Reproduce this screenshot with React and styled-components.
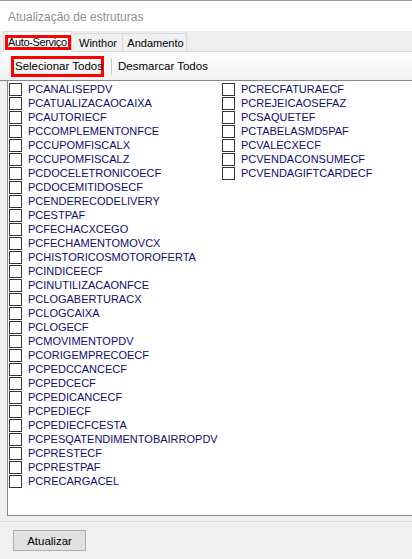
import React from "react";
import styled, { createGlobalStyle } from "styled-components";

const Global = createGlobalStyle`
  html, body { margin: 0; padding: 0; background: #f0f0f0; }
  * { box-sizing: border-box; }
`;

const Window = styled.div`
  width: 412px;
  height: 559px;
  display: flex;
  flex-direction: column;
  background: #f0f0f0;
  border-top: 1px solid #a0a0a0;
  font-family: "Liberation Sans", Arial, sans-serif;
  overflow: hidden;
`;

const TitleBar = styled.div`
  height: 30px;
  background: #ffffff;
  display: flex;
  align-items: center;
  padding-left: 8px;
  padding-top: 1px;
  color: #8f8f8f;
  font-size: 12px;
  flex-shrink: 0;
`;

const TabStrip = styled.div`
  height: 21px;
  background: #eeeeee;
  display: flex;
  align-items: flex-end;
  padding-left: 3px;
  border-bottom: 1px solid #d9d9d9;
  flex-shrink: 0;
`;

const Tab = styled.div`
  height: ${(p) => (p.$active ? "21px" : "19px")};
  margin-bottom: -1px;
  width: ${(p) => p.$w}px;
  background: ${(p) => (p.$active ? "#ffffff" : "#f0f0f0")};
  border: 1px solid #d9d9d9;
  border-left: ${(p) => (p.$first || p.$active ? "1px solid #d9d9d9" : "none")};
  border-bottom: ${(p) => (p.$active ? "1px solid #ffffff" : "1px solid #d9d9d9")};
  display: flex;
  align-items: ${(p) => (p.$active ? "flex-start" : "center")};
  justify-content: ${(p) => (p.$active ? "flex-start" : "center")};
  padding: ${(p) => (p.$active ? "3px 0 0 1px" : "1px 0 0 2px")};
  font-size: 11px;
  color: #000;
  white-space: nowrap;
  position: relative;
  z-index: ${(p) => (p.$active ? 1 : 0)};
`;

const RedLabel = styled.span`
  border: 3px solid #f00;
  height: 15px;
  width: 66px;
  display: flex;
  align-items: center;
  padding-left: 0;
  line-height: 1;
  white-space: nowrap;
  letter-spacing: -0.35px;
`;

const Toolbar = styled.div`
  height: 29px;
  background: linear-gradient(#fcfcfc, #f3f3f3);
  border-bottom: 1px solid #828790;
  display: flex;
  align-items: center;
  padding-left: 11px;
  font-size: 11.5px;
  color: #000;
  flex-shrink: 0;
`;

const ToolButton = styled.div`
  height: 21px;
  display: flex;
  align-items: center;
  padding: 0 ${(p) => (p.$red ? 1 : 0)}px;
  border: ${(p) => (p.$red ? "3px solid #f00" : "none")};
  width: ${(p) => (p.$w ? p.$w + "px" : "auto")};
  white-space: nowrap;
`;

const Separator = styled.div`
  width: 1px;
  height: 17px;
  background: #c8c8c8;
  margin: 0 6px 0 7px;
`;

const Body = styled.div`
  flex: 1;
  display: flex;
  padding-left: 7px;
  min-height: 0;
`;

const List = styled.div`
  flex: 1;
  background: #ffffff;
  border-left: 1px solid #828790;
  border-bottom: 1px solid #828790;
  display: grid;
  grid-template-columns: 213px 1fr;
  align-content: start;
  padding: 1px 0 0 1px;
`;

const Column = styled.div`
  display: flex;
  flex-direction: column;
`;

const Row = styled.div`
  height: 14px;
  display: flex;
  align-items: center;
  gap: 6px;
  font-size: 11px;
  color: #0d0d6e;
  white-space: nowrap;
`;

const Box = styled.span`
  width: 13px;
  height: 13px;
  border: 1px solid #333333;
  background: #fff;
  flex-shrink: 0;
`;

const Footer = styled.div`
  height: 38px;
  flex-shrink: 0;
  border-top: 1px solid #dadada;
  margin-top: 5px;
  padding: 8px 0 0 13px;
`;

const Button = styled.div`
  width: 73px;
  height: 21px;
  background: #e1e1e1;
  border: 1px solid #adadad;
  display: flex;
  align-items: center;
  justify-content: center;
  font-size: 11.5px;
  color: #000;
`;

const left = [
  "PCANALISEPDV",
  "PCATUALIZACAOCAIXA",
  "PCAUTORIECF",
  "PCCOMPLEMENTONFCE",
  "PCCUPOMFISCALX",
  "PCCUPOMFISCALZ",
  "PCDOCELETRONICOECF",
  "PCDOCEMITIDOSECF",
  "PCENDERECODELIVERY",
  "PCESTPAF",
  "PCFECHACXCEGO",
  "PCFECHAMENTOMOVCX",
  "PCHISTORICOSMOTOROFERTA",
  "PCINDICEECF",
  "PCINUTILIZACAONFCE",
  "PCLOGABERTURACX",
  "PCLOGCAIXA",
  "PCLOGECF",
  "PCMOVIMENTOPDV",
  "PCORIGEMPRECOECF",
  "PCPEDCCANCECF",
  "PCPEDCECF",
  "PCPEDICANCECF",
  "PCPEDIECF",
  "PCPEDIECFCESTA",
  "PCPESQATENDIMENTOBAIRROPDV",
  "PCPRESTECF",
  "PCPRESTPAF",
  "PCRECARGACEL",
];

const right = [
  "PCRECFATURAECF",
  "PCREJEICAOSEFAZ",
  "PCSAQUETEF",
  "PCTABELASMD5PAF",
  "PCVALECXECF",
  "PCVENDACONSUMECF",
  "PCVENDAGIFTCARDECF",
];

export default function App() {
  return (
    <>
      <Global />
      <Window>
        <TitleBar>Atualização de estruturas</TitleBar>
        <TabStrip>
          <Tab $active $first $w={69}>
            <RedLabel>Auto-Serviço</RedLabel>
          </Tab>
          <Tab $w={51}>Winthor</Tab>
          <Tab $w={64}>Andamento</Tab>
        </TabStrip>
        <Toolbar>
          <ToolButton $red $w={93}>Selecionar Todos</ToolButton>
          <Separator />
          <ToolButton>Desmarcar Todos</ToolButton>
        </Toolbar>
        <Body>
          <List>
            <Column>
              {left.map((n) => (
                <Row key={n}>
                  <Box />
                  {n}
                </Row>
              ))}
            </Column>
            <Column>
              {right.map((n) => (
                <Row key={n}>
                  <Box />
                  {n}
                </Row>
              ))}
            </Column>
          </List>
        </Body>
        <Footer>
          <Button>Atualizar</Button>
        </Footer>
      </Window>
    </>
  );
}
